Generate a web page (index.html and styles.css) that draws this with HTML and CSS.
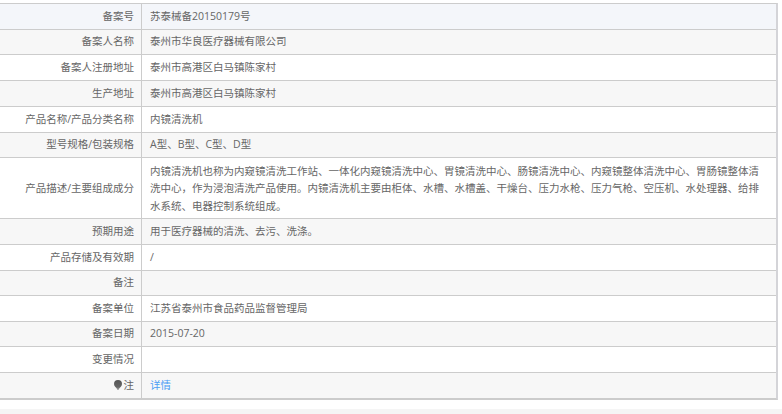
FILE: index.html
```html
<!DOCTYPE html>
<html lang="zh-CN">
<head>
<meta charset="utf-8">
<title>备案信息</title>
<link rel="stylesheet" href="styles.css">
</head>
<body>
<main class="sheet">
<table class="info">
<colgroup><col class="col-label"><col></colgroup>
<tbody>
<tr class="first narrow"><th>备案号</th><td>苏泰械备20150179号</td></tr>
<tr class="narrow"><th>备案人名称</th><td>泰州市华良医疗器械有限公司</td></tr>
<tr><th>备案人注册地址</th><td>泰州市高港区白马镇陈家村</td></tr>
<tr><th>生产地址</th><td>泰州市高港区白马镇陈家村</td></tr>
<tr><th>产品名称/产品分类名称</th><td>内镜清洗机</td></tr>
<tr class="narrow"><th>型号规格/包装规格</th><td>A型、B型、C型、D型</td></tr>
<tr class="tall"><th>产品描述/主要组成成分</th><td>内镜清洗机也称为内窥镜清洗工作站、一体化内窥镜清洗中心、胃镜清洗中心、肠镜清洗中心、内窥镜整体清洗中心、胃肠镜整体清洗中心，作为浸泡清洗产品使用。内镜清洗机主要由柜体、水槽、水槽盖、干燥台、压力水枪、压力气枪、空压机、水处理器、给排水系统、电器控制系统组成。</td></tr>
<tr><th>预期用途</th><td>用于医疗器械的清洗、去污、洗涤。</td></tr>
<tr><th>产品存储及有效期</th><td>/</td></tr>
<tr class="narrow"><th>备注</th><td></td></tr>
<tr><th>备案单位</th><td>江苏省泰州市食品药品监督管理局</td></tr>
<tr class="narrow"><th>备案日期</th><td>2015-07-20</td></tr>
<tr><th>变更情况</th><td></td></tr>
<tr><th><svg class="pin" viewBox="0 0 8 10" aria-hidden="true"><defs><linearGradient id="pin-shade" x1="0" y1="0" x2="0" y2="1"><stop offset="0" stop-color="#555"/><stop offset="0.7" stop-color="#666"/><stop offset="1" stop-color="#aaa"/></linearGradient></defs><path fill="url(#pin-shade)" d="M4 0a4 4 0 0 1 4 4C8 6.500 5.400 7.500 4.500 10h-1C2.600 7.500 0 6.500 0 4a4 4 0 0 1 4-4z"/></svg>注</th><td><a href="#">详情</a></td></tr>
</tbody>
</table>
</main>
<div class="foot"></div>
</body>
</html>
```
FILE: styles.css
```css
html, body {
  margin: 0;
  padding: 0;
  background: #fff;
}
body {
  height: 414px;
  overflow: hidden;
  font-family: "Open Sans", "Noto Sans CJK SC", sans-serif;
  font-size: 10.5px;
  color: #666;
}
.sheet {
  padding-top: 3px;
  width: 778px;
}
.info {
  width: 100%;
  table-layout: fixed;
  border-collapse: separate;
  border-spacing: 0;
  border-top: 1px solid #ccc;
  border-right: 2px solid #d4d4d8;
  border-bottom: 2px solid #ccc;
}
.col-label {
  width: 142px;
}
.info th, .info td {
  height: 26px;
  padding: 0;
  border-top: 1px solid #ccc;
  line-height: 17.300px;
  box-sizing: border-box;
  font-weight: 400;
}
.info .narrow th, .info .narrow td {
  height: 25px;
}
.info .first th, .info .first td {
  border-top: 0;
  background: #f4f6fa;
}
.info th {
  text-align: right;
  padding-right: 7px;
  border-right: 1px solid #ccc;
}
.info td {
  text-align: left;
  padding-left: 8px;
  padding-right: 8px;
}
.info tr:nth-child(even) th, .info tr:nth-child(even) td {
  background: #f7f7f7;
}
.info .tall th, .info .tall td {
  height: 61px;
  padding-top: 2px;
}
.info a {
  color: #4a9df5;
  text-decoration: none;
}
.pin {
  width: 8px;
  height: 10px;
  margin-right: 2px;
  vertical-align: -1px;
}
.foot {
  margin-top: 9px;
  height: 10px;
  background: #f5f5f5;
}
```
